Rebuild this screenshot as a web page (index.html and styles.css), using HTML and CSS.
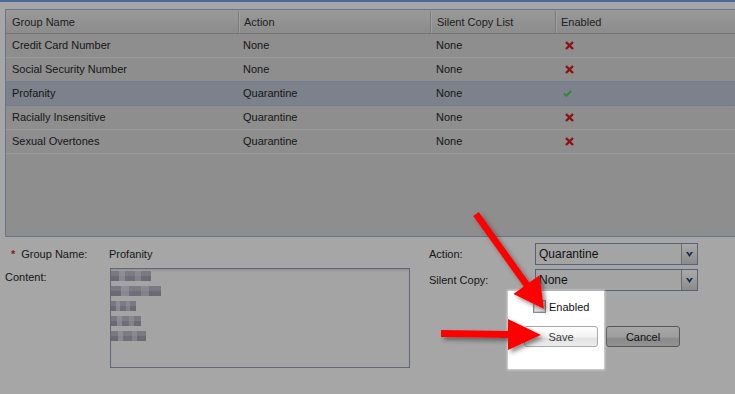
FILE: index.html
```html
<!DOCTYPE html>
<html lang="en">
<head>
    <meta charset="UTF-8">
    <title>Content Groups</title>
    <link rel="stylesheet" href="styles.css">
</head>
<body>
    <div class="page">
        <div class="top-bar"></div>

        <div class="grid-panel">
            <div class="grid-head">
                <div class="cell col-name">Group Name</div>
                <div class="cell col-action">Action</div>
                <div class="cell col-copy">Silent Copy List</div>
                <div class="cell col-enabled">Enabled</div>
            </div>
            <div class="grid-row">
                <div class="cell col-name">Credit Card Number</div>
                <div class="cell col-action">None</div>
                <div class="cell col-copy">None</div>
                <div class="cell col-enabled"><svg class="icon-x" width="9" height="9" viewBox="0 0 9 9"><path d="M1 1L8 8M8 1L1 8"/></svg></div>
            </div>
            <div class="grid-row">
                <div class="cell col-name">Social Security Number</div>
                <div class="cell col-action">None</div>
                <div class="cell col-copy">None</div>
                <div class="cell col-enabled"><svg class="icon-x" width="9" height="9" viewBox="0 0 9 9"><path d="M1 1L8 8M8 1L1 8"/></svg></div>
            </div>
            <div class="grid-row selected">
                <div class="cell col-name">Profanity</div>
                <div class="cell col-action">Quarantine</div>
                <div class="cell col-copy">None</div>
                <div class="cell col-enabled"><svg class="icon-check" width="9" height="7" viewBox="0 0 9 7"><path d="M1 3.5L3.3 5.8L8 1"/></svg></div>
            </div>
            <div class="grid-row">
                <div class="cell col-name">Racially Insensitive</div>
                <div class="cell col-action">Quarantine</div>
                <div class="cell col-copy">None</div>
                <div class="cell col-enabled"><svg class="icon-x" width="9" height="9" viewBox="0 0 9 9"><path d="M1 1L8 8M8 1L1 8"/></svg></div>
            </div>
            <div class="grid-row">
                <div class="cell col-name">Sexual Overtones</div>
                <div class="cell col-action">Quarantine</div>
                <div class="cell col-copy">None</div>
                <div class="cell col-enabled"><svg class="icon-x" width="9" height="9" viewBox="0 0 9 9"><path d="M1 1L8 8M8 1L1 8"/></svg></div>
            </div>
        </div>

        <div class="form">
            <div class="form-left">
                <div class="label required"><span class="star">*</span>Group Name:</div>
                <div class="value">Profanity</div>
                <div class="label label-top">Content:</div>
                <div class="content-box">
                    <div class="blur-line w40"></div>
                    <div class="blur-line w50"></div>
                    <div class="blur-line w25"></div>
                    <div class="blur-line w30"></div>
                    <div class="blur-line w35"></div>
                </div>
            </div>

            <div class="form-right">
                <div class="field-grid">
                    <div class="label">Action:</div>
                    <div class="select">
                        <span class="select-text">Quarantine</span>
                        <span class="select-btn"><svg width="7" height="5" viewBox="0 0 7 5"><path d="M0 0H2L3.5 2L5 0H7L3.5 5Z"/></svg></span>
                    </div>
                    <div class="label">Silent Copy:</div>
                    <div class="select">
                        <span class="select-text">None</span>
                        <span class="select-btn"><svg width="7" height="5" viewBox="0 0 7 5"><path d="M0 0H2L3.5 2L5 0H7L3.5 5Z"/></svg></span>
                    </div>
                </div>
                <div class="enabled-row">
                    <span class="checkbox"></span>
                    <span>Enabled</span>
                </div>
                <div class="button-row">
                    <button class="btn btn-save">Save</button>
                    <button class="btn btn-cancel">Cancel</button>
                </div>
            </div>
        </div>

        <div class="spotlight"></div>

        <svg class="arrows" width="735" height="394" viewBox="0 0 735 394">
            <defs>
                <filter id="arrow-shadow" x="-20%" y="-20%" width="140%" height="140%">
                    <feDropShadow dx="3" dy="3" stdDeviation="2" flood-color="#333" flood-opacity="0.55"/>
                </filter>
            </defs>
            <polygon points="478.8,212 529.3,282.6 539.5,275.3 544,309 513.5,293.9 523.7,286.6 473.2,216" filter="url(#arrow-shadow)"/>
            <polygon points="441,330 508,331 508,319 541,335 508,350 508,338 441,337" filter="url(#arrow-shadow)"/>
        </svg>
    </div>
</body>
</html>
```

FILE: styles.css
```css
body {
    margin: 0;
    font-family: "Liberation Sans", Arial, sans-serif;
    font-size: 11px;
    color: #161616;
    background-color: #a6a6a6;
}

.page {
    position: relative;
    width: 735px;
    height: 394px;
    overflow: hidden;
}

.top-bar {
    height: 2px;
    background-color: #4b6a9c;
}

/* grid */

.grid-panel {
    margin: 7px 0 0 5px;
    height: 228px;
    box-sizing: border-box;
    border: 1px solid #67758f;
    border-right: none;
    background-color: #8e8e8e;
}

.grid-head {
    display: flex;
    height: 24px;
    box-sizing: border-box;
    padding-top: 1px;
    border-bottom: 1px solid #767676;
    background: linear-gradient(#999999, #8c8c8c);
    color: #202020;
}

.grid-head .cell + .cell {
    border-left: 1px solid #7b7b7b;
    box-shadow: inset 1px 0 #9f9f9f;
}

.grid-row {
    display: flex;
    height: 24px;
    box-sizing: border-box;
    border-bottom: 1px solid #9b9b9b;
}

.grid-row.selected {
    margin-top: -1px;
    height: 25px;
    border-top: 1px dotted #6c7896;
    border-bottom: 1px dotted #6c7896;
    background-color: #7c818b;
}

.cell {
    display: flex;
    align-items: center;
    box-sizing: border-box;
    padding-left: 6px;
    white-space: nowrap;
}

.grid-row .cell {
    padding-bottom: 1px;
}

.col-name {
    width: 232px;
}

.col-action {
    width: 192px;
    padding-left: 5px;
}

.col-copy {
    width: 125px;
    padding-left: 6px;
}

.col-enabled {
    flex: 1;
    padding-left: 5px;
}

.grid-row .col-enabled {
    padding-left: 10px;
}

.icon-x path {
    fill: none;
    stroke: #8b1212;
    stroke-width: 2.4;
}

.icon-check {
    margin-left: -2px;
}

.icon-check path {
    fill: none;
    stroke: #2b8a2b;
    stroke-width: 1.8;
}

/* form */

.form {
    display: flex;
    padding-top: 6px;
}

.form-left {
    width: 429px;
    box-sizing: border-box;
    padding-left: 5px;
    display: grid;
    grid-template-columns: 105px 300px;
    grid-template-rows: 22px auto;
    row-gap: 3px;
    align-content: start;
}

.label {
    display: flex;
    align-items: center;
    white-space: nowrap;
}

.label-top {
    align-items: flex-start;
    padding-top: 3px;
}

.required {
    padding-left: 6px;
}

.star {
    color: #8a1c1c;
    font-weight: bold;
    margin-right: 6px;
}

.value {
    display: flex;
    align-items: center;
    margin-left: -1px;
}

.content-box {
    height: 100px;
    box-sizing: border-box;
    border: 1px solid #61667a;
    background-color: #a4a4a4;
    box-shadow: inset 0 3px 3px -2px #8a8a8a;
    padding-top: 2px;
}

/* blurred (pixelated) words */
.blur-line {
    height: 10px;
    margin-bottom: 5px;
    background-color: #7a7983;
    background-image:
        linear-gradient(rgba(150, 150, 156, 0.35), rgba(150, 150, 156, 0.35) 50%, transparent 50%),
        linear-gradient(90deg, #6a6974 0, #6a6974 20%, #8a8990 20%, #8a8990 35%, #6f6e79 35%, #6f6e79 60%, #83828a 60%, #83828a 75%, #6b6a75 75%);
}

.w40 { width: 40px; }
.w50 { width: 50px; }
.w25 { width: 25px; }
.w30 { width: 30px; }
.w35 { width: 35px; }

.form-right {
    width: 306px;
}

.field-grid {
    display: grid;
    grid-template-columns: 106px 163px;
    grid-auto-rows: 22px;
    row-gap: 4px;
}

.select {
    display: flex;
    box-sizing: border-box;
    border: 1px solid #596179;
    background-color: #a4a4a4;
}

.select-text {
    flex: 1;
    padding-left: 3px;
    font-size: 12px;
    line-height: 21px;
    color: #101010;
}

.select-btn {
    width: 15px;
    display: flex;
    align-items: center;
    justify-content: center;
    border-left: 1px solid #6d6d6d;
    background: linear-gradient(#a9a9a9, #8b8b8b);
}

.select-btn path {
    fill: #1c2a55;
}

.enabled-row {
    position: relative;
    z-index: 2;
    display: flex;
    align-items: center;
    gap: 3px;
    margin: 9px 0 0 104px;
    height: 13px;
    color: #111;
}

.checkbox {
    width: 11px;
    height: 11px;
    border: 1px solid #8a8a8a;
    background: linear-gradient(135deg, #d6d6d6, #f2f2f2);
    box-shadow: inset 0 0 0 1px #c9c9c9;
}

.button-row {
    display: flex;
    gap: 8px;
    margin: 13px 0 0 95px;
}

.btn {
    width: 74px;
    height: 21px;
    padding: 0;
    border-radius: 3px;
    font-family: "Liberation Sans", Arial, sans-serif;
    font-size: 11px;
}

.btn-save {
    position: relative;
    z-index: 2;
    border: 1px solid #a9a9a9;
    color: #3a3a3a;
    background: linear-gradient(#ffffff 0, #f1f1f1 55%, #e1e1e1 56%, #ececec 100%);
}

.btn-cancel {
    border: 1px solid #575757;
    color: #111;
    background: linear-gradient(#a7a7a7 0, #9d9d9d 55%, #8a8a8a 56%, #929292 100%);
}

/* overlays */

.spotlight {
    position: absolute;
    left: 508px;
    top: 291px;
    width: 96px;
    height: 78px;
    background-color: #ffffff;
    box-shadow: 0 0 2px 1px #d8d8d8;
    z-index: 1;
}

.arrows {
    position: absolute;
    left: 0;
    top: 0;
    z-index: 3;
    pointer-events: none;
}

.arrows polygon {
    fill: #ff0000;
}
```
